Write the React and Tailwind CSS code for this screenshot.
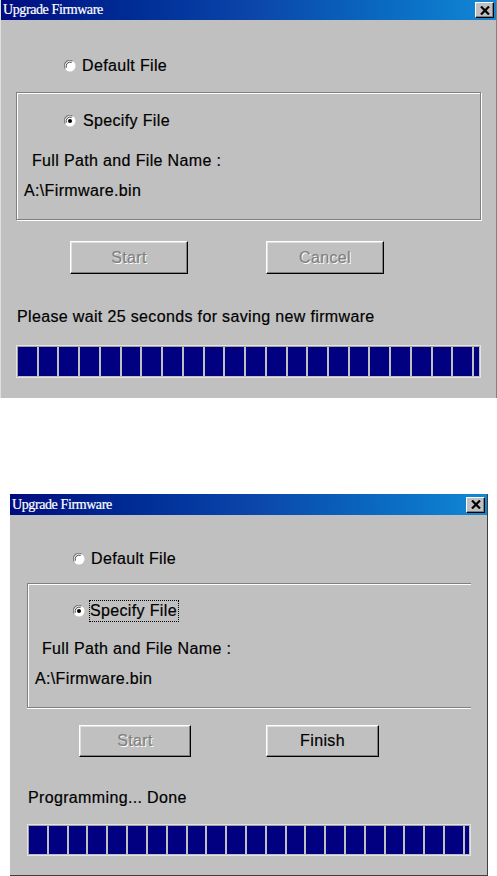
import React from 'react';

const Radio = ({ checked }) => (
  <svg width="12" height="12" viewBox="0 0 12 12" className="shrink-0">
    <circle cx="6" cy="6" r="5.5" fill="#ffffff" />
    <path d="M1.2 8.5 A5.3 5.3 0 0 1 8.5 1.2" fill="none" stroke="#808080" strokeWidth="1.2" />
    <path d="M2.4 7.6 A4 4 0 0 1 7.6 2.4" fill="none" stroke="#404040" strokeWidth="1" />
    {checked && <circle cx="6" cy="6" r="2" fill="#000000" />}
  </svg>
);

const CloseButton = ({ className }) => (
  <div
    className={`${className} bg-[#c0c0c0] border border-t-white border-l-white border-r-black border-b-black shadow-[inset_-1px_-1px_0_#808080] flex items-center justify-center`}
  >
    <svg width="10" height="9" viewBox="0 0 10 9">
      <path d="M1 0.5 L9 8.5 M9 0.5 L1 8.5" stroke="#000000" strokeWidth="2.2" />
    </svg>
  </div>
);

const TitleBar = ({ height, closeClass }) => (
  <div
    className={`${height} flex items-center justify-between bg-gradient-to-r from-[#000a80] via-[#0c44aa] to-[#1288d4] pl-[2px]`}
  >
    <span className="text-white text-[14px] leading-none tracking-[-0.4px] font-['Liberation_Serif',serif]">
      Upgrade Firmware
    </span>
    <CloseButton className={closeClass} />
  </div>
);

const buttonBase =
  'h-full bg-[#c0c0c0] border border-t-white border-l-white border-r-black border-b-black shadow-[inset_-1px_-1px_0_#808080,inset_1px_1px_0_#dfdfdf] flex items-center justify-center text-[16px] leading-4';

const disabledText = 'text-[#808080] [text-shadow:1px_1px_0_#ffffff]';

const Progress = ({ className, partial }) => (
  <div
    className={`${className} border border-[#e4e4e4] shadow-[inset_1px_1px_0_#a0a0a0] p-px flex gap-[2px]`}
  >
    {Array.from({ length: 22 }).map((_, i) => (
      <div key={i} className="flex-1 bg-[#000080]" />
    ))}
    <div className={`${partial} bg-[#000080]`} />
  </div>
);

const App = () => {
  return (
    <div className="w-[497px] min-h-[876px] bg-white font-['Liberation_Sans',Arial,sans-serif] tracking-[0.35px] [-webkit-text-stroke:0.2px] text-black flex flex-col">
      {/* first dialog: waiting */}
      <div className="w-[497px] h-[398px] bg-[#c0c0c0] border-l border-l-[#dfdfdf] border-r border-r-[#808080] flex flex-col">
        <TitleBar height="h-[20px]" closeClass="w-[19px] h-[16px] mr-[2px]" />

        <div className="mt-[38px] ml-[63px] h-4 flex items-center gap-[6px]">
          <Radio />
          <span className="text-[16px] leading-4">Default File</span>
        </div>

        <div className="mt-[18px] ml-[15px] w-[465px] h-[128px] border border-[#808080] shadow-[inset_1px_1px_0_#ffffff,1px_1px_0_#ffffff] flex flex-col">
          <div className="mt-[20px] ml-[47px] h-4 flex items-center gap-[7px]">
            <Radio checked />
            <span className="text-[16px] leading-4">Specify File</span>
          </div>
          <div className="mt-[24px] ml-[15px] text-[16px] leading-4">Full Path and File Name :</div>
          <div className="mt-[14px] ml-[7px] text-[16px] leading-4">A:\Firmware.bin</div>
        </div>

        <div className="mt-[21px] h-[33px] flex">
          <div className={`${buttonBase} ${disabledText} ml-[69px] w-[118px]`}>Start</div>
          <div className={`${buttonBase} ${disabledText} ml-[78px] w-[118px]`}>Cancel</div>
        </div>

        <div className="mt-[35px] ml-[16px] text-[16px] leading-4">
          Please wait 25 seconds for saving new firmware
        </div>

        <Progress className="mt-[20px] ml-[15px] w-[465px] h-[33px]" partial="w-[5px]" />
      </div>

      {/* second dialog: done */}
      <div className="mt-[96px] ml-[10px] w-[478px] h-[382px] bg-[#c0c0c0] border-r border-b border-[#404040] flex flex-col">
        <TitleBar height="h-[21px]" closeClass="w-[19px] h-[16px] mr-[2px]" />

        <div className="mt-[36px] ml-[63px] h-4 flex items-center gap-[6px]">
          <Radio />
          <span className="text-[16px] leading-4">Default File</span>
        </div>

        <div className="mt-[16px] ml-[17px] w-[444px] h-[125px] border border-r-0 border-[#808080] shadow-[inset_1px_1px_0_#ffffff,0_1px_0_#ffffff] flex flex-col">
          <div className="mt-[16px] ml-[45px] flex items-center gap-[4px]">
            <Radio checked />
            <span className="border border-dotted border-black pr-px py-[2px] text-[16px] leading-4">
              Specify File
            </span>
          </div>
          <div className="mt-[19px] ml-[14px] text-[16px] leading-4">Full Path and File Name :</div>
          <div className="mt-[14px] ml-[7px] text-[16px] leading-4">A:\Firmware.bin</div>
        </div>

        <div className="mt-[17px] h-[32px] flex">
          <div className={`${buttonBase} ${disabledText} ml-[69px] w-[112px]`}>Start</div>
          <div className={`${buttonBase} ml-[75px] w-[113px]`}>Finish</div>
        </div>

        <div className="mt-[33px] ml-[18px] text-[16px] leading-4">Programming... Done</div>

        <Progress className="mt-[18px] ml-[17px] w-[444px] h-[32px]" partial="w-[4px]" />
      </div>
    </div>
  );
};

export default App;
